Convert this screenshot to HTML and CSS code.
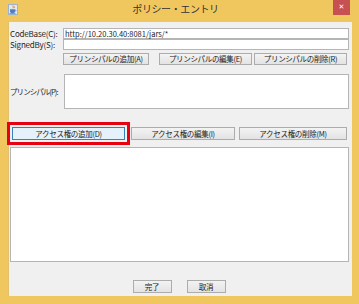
FILE: index.html
```html
<!DOCTYPE html>
<html lang="ja">
<head>
    <meta charset="UTF-8">
    <title>ポリシー・エントリ</title>
    <link rel="stylesheet" href="styles.css">
</head>
<body>
    <div class="window">
        <div class="titlebar">
            <svg class="app-icon" width="10" height="11" viewBox="0 0 10 11">
                <rect x="0.5" y="0.5" width="9" height="10" fill="#dfe8f3" stroke="#9fb3cc"/>
                <path d="M5 1.5c-1 1 1 1.5 0 2.8M6.3 2c-.6.7.7 1 0 2" stroke="#e07a2a" stroke-width="0.8" fill="none"/>
                <path d="M2 5.2h5v2.3c0 1-1 1.6-2.5 1.6S2 8.5 2 7.5z" fill="#4f7fc0"/>
                <path d="M7 5.8c1.2 0 1.2 1.6 0 1.6" stroke="#4f7fc0" stroke-width="0.7" fill="none"/>
                <rect x="1.5" y="9.2" width="6" height="0.7" fill="#4f7fc0"/>
            </svg>
            <div class="title">ポリシー・エントリ</div>
            <div class="close">✕</div>
        </div>
        <div class="content">
            <div class="field-row">
                <label class="lbl">CodeBase(C):</label>
                <div class="input">http://10.20.30.40:8081/jars/*</div>
            </div>
            <div class="field-row">
                <label class="lbl">SignedBy(S):</label>
                <div class="input"></div>
            </div>
            <div class="btn-row principal-btns">
                <button class="btn w86">プリンシパルの追加(A)</button>
                <button class="btn w93 gap-l">プリンシパルの編集(E)</button>
                <button class="btn w93">プリンシパルの削除(R)</button>
            </div>
            <div class="principal-row">
                <label class="lbl lbl-kana">プリンシパル(P):</label>
                <div class="textarea"></div>
            </div>
            <div class="btn-row access-btns">
                <button class="btn btn-focus w113">アクセス権の追加(D)</button>
                <button class="btn w104">アクセス権の編集(I)</button>
                <button class="btn w108">アクセス権の削除(M)</button>
            </div>
            <div class="list"></div>
            <div class="footer">
                <button class="btn w39">完了</button>
                <button class="btn w39">取消</button>
            </div>
        </div>
    </div>
</body>
</html>
```

FILE: styles.css
```css
body {
    margin: 0;
    background: #f0c75e;
    font-family: "Noto Sans CJK JP", "Liberation Sans", sans-serif;
    font-size: 8px;
    color: #1e1e1e;
}
.window {
    width: 359px;
    height: 304px;
    background: #f0c75e;
    display: flex;
    flex-direction: column;
}
.titlebar {
    height: 22px;
    position: relative;
    display: flex;
    align-items: flex-start;
}
.app-icon {
    margin: 4px 0 0 8px;
}
.title {
    flex: 1;
    text-align: center;
    font-size: 10px;
    line-height: 12px;
    padding-top: 3px;
    color: #333;
    letter-spacing: -0.4px;
}
.close {
    width: 17px;
    height: 15px;
    margin-right: 9px;
    background: #c75050;
    color: #fff;
    font-size: 7px;
    line-height: 15px;
    text-align: center;
    font-family: "DejaVu Sans", sans-serif;
}
.content {
    margin: 0 7px 8px 8px;
    height: 274px;
    background: #f0f0f0;
    border-left: 1px solid #e3c070;
    box-sizing: border-box;
    padding: 6px 3px 0 0;
    display: flex;
    flex-direction: column;
}
.field-row {
    display: flex;
    align-items: center;
    height: 11px;
}
.lbl {
    width: 53px;
    padding-left: 1px;
    white-space: nowrap;
    letter-spacing: -0.2px;
}
.lbl-kana {
    font-size: 7.5px;
    letter-spacing: -0.9px;
}
.input {
    flex: 1;
    height: 11px;
    box-sizing: border-box;
    background: #fff;
    border: 1px solid #b5b5b5;
    font-size: 7.5px;
    line-height: 9px;
    padding-left: 1px;
    white-space: nowrap;
}
.btn-row {
    display: flex;
}
.principal-btns {
    margin: 3px 0 0 54px;
}
.btn {
    height: 12px;
    padding: 0;
    margin: 0 2px 0 0;
    font-family: inherit;
    font-size: 7.5px;
    line-height: 10px;
    color: #222;
    background: linear-gradient(#f3f3f3, #e3e3e3);
    border: 1px solid #acacac;
    border-radius: 0;
    white-space: nowrap;
    letter-spacing: -0.3px;
}
.gap-l {
    margin-left: 8px;
}
.w86 { width: 86px; }
.w93 { width: 93px; }
.w113 { width: 113px; }
.w104 { width: 104px; }
.w108 { width: 108px; }
.w39 { width: 39px; }
.principal-row {
    display: flex;
    align-items: center;
    margin-top: 9px;
}
.textarea {
    flex: 1;
    height: 35px;
    background: #fff;
    border: 1px solid #b5b5b5;
    box-sizing: border-box;
    margin-left: 1px;
}
.access-btns {
    margin: 18px 0 0 3px;
}
.access-btns .btn {
    height: 13px;
    margin-right: 6px;
}
.access-btns .btn:last-child {
    margin-right: 0;
    margin-left: -2px;
}
.btn-focus {
    background: #e5f1fb;
    border-color: #3c7fb1;
    outline: 3px solid #e60012;
    outline-offset: 2px;
}
.list {
    height: 115px;
    margin: 7px 0 0 1px;
    background: #fff;
    border: 1px solid #b5b5b5;
    box-sizing: border-box;
}
.footer {
    display: flex;
    justify-content: center;
    gap: 15px;
    margin-top: 18px;
}
.footer .btn {
    height: 13px;
    margin: 0;
}
```
